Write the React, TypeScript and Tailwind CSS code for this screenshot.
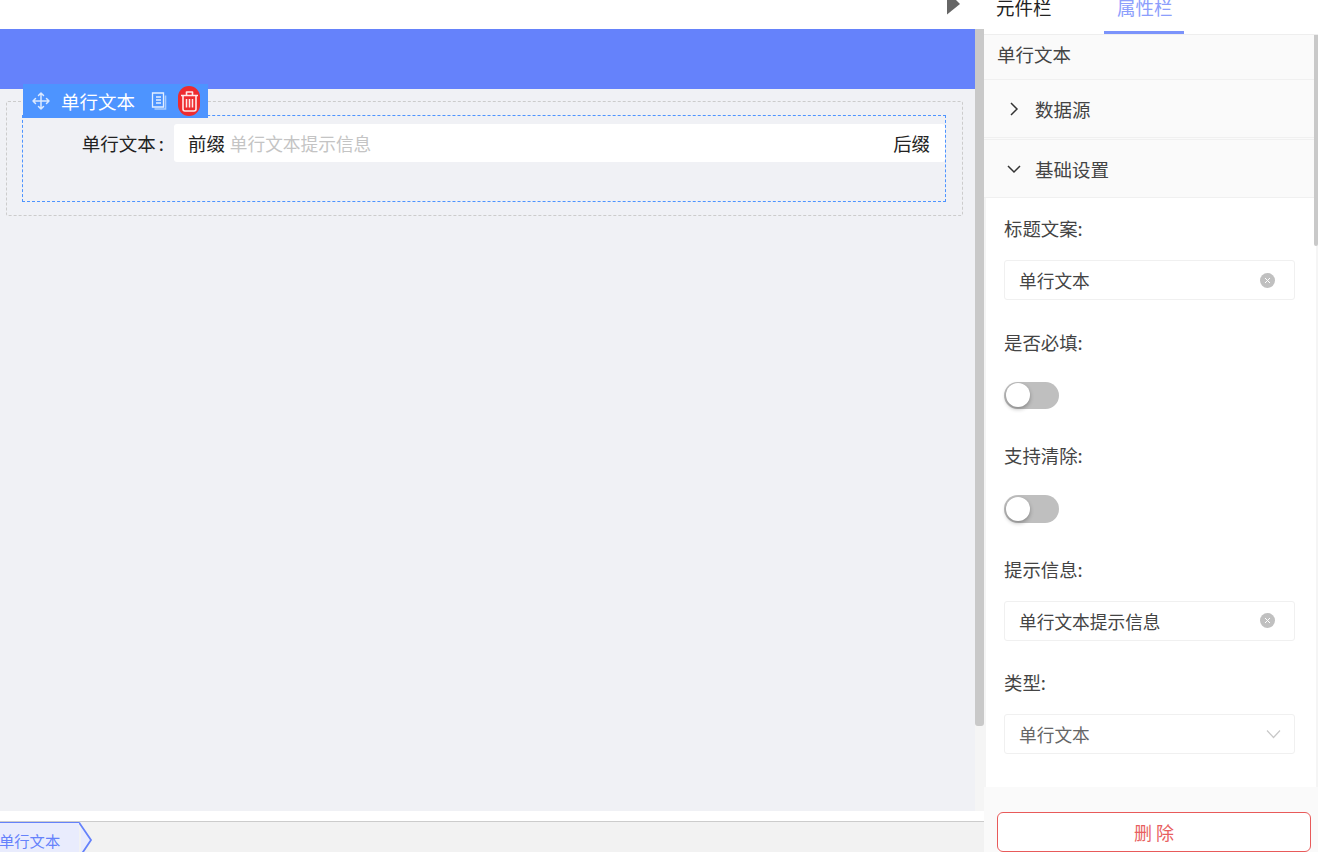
import React from "react";

const font = { fontFamily: '"Noto Sans CJK SC", "Liberation Sans", sans-serif' };

function MoveIcon() {
  return (
    <svg width="20" height="20" viewBox="0 0 20 20" fill="none" stroke="#dbe9ff" strokeWidth="1.5" strokeLinecap="round" strokeLinejoin="round">
      <path d="M10 2v16M2 10h16M7.500 4.500 10 2l2.500 2.500M7.500 15.500 10 18l2.500-2.500M4.500 7.500 2 10l2.500 2.500M15.500 7.500 18 10l-2.500 2.500" />
    </svg>
  );
}

function CopyIcon() {
  return (
    <svg width="18" height="18" viewBox="0 0 18 18" fill="none" stroke="#e3eeff" strokeWidth="1.300">
      <path d="M1.500 1h11v14h-11z" />
      <path d="M5 5h5M5 8h5M5 11h5" />
      <path d="M14.500 3.500V17H3.500" stroke="#a9cbff" strokeWidth="1.600" />
    </svg>
  );
}

function TrashIcon() {
  return (
    <svg width="19" height="22" viewBox="0 0 19 22" fill="none" stroke="#ffe9e9" strokeWidth="1.600" strokeLinejoin="round">
      <path d="M1 5.500h17M6.500 5V2h6v3" />
      <path d="M3 6v13a2 2 0 0 0 2 2h9a2 2 0 0 0 2-2V6" />
      <path d="M6.500 9v8.500M9.500 9v8.500M12.500 9v8.500" strokeWidth="1.500" />
    </svg>
  );
}

function ClearIcon() {
  return (
    <span className="flex h-[15px] w-[15px] items-center justify-center rounded-full bg-[#c0c0c0]">
      <svg width="7" height="7" viewBox="0 0 7 7" fill="none" stroke="#ffffff" strokeWidth="1">
        <path d="M1 1l5 5M6 1 1 6" />
      </svg>
    </span>
  );
}

function Chevron({ open }: { open: boolean }) {
  return (
    <svg width="14" height="14" viewBox="0 0 14 14" fill="none" stroke="#333333" strokeWidth="1.500">
      {open ? <path d="M1 4 7 10 13 4" /> : <path d="M4 1 10 7 4 13" />}
    </svg>
  );
}

function TextField({ value }: { value: string }) {
  return (
    <div className="mt-[19px] flex h-[40px] w-[291px] items-center justify-between rounded-[3px] border border-[#f0f0f0] pl-[14px] pr-[19px] text-[17.700px] text-[#444444]">
      <span className="pt-[1px]">{value}</span>
      <ClearIcon />
    </div>
  );
}

function Toggle() {
  return (
    <div className="mt-[27px] flex h-[27.500px] w-[55px] items-center rounded-full bg-[#bfbfbf] pl-[2px]">
      <span className="h-[24px] w-[24px] rounded-full bg-white shadow-[0_2px_4px_rgba(0,0,0,0.3)]" />
    </div>
  );
}

function Field({ label, children }: { label: string; children: React.ReactNode }) {
  return (
    <div className="h-[113.500px]">
      <div className="h-[26px] text-[18.400px] leading-[27px] text-[#444444]">{label}</div>
      {children}
    </div>
  );
}

function CollapseHeader({ open, title }: { open: boolean; title: string }) {
  return (
    <div className="flex h-[59px] shrink-0 items-center border-y border-[#f0f0f0] bg-[#fafafa] pl-[23px] text-[#444444]">
      <Chevron open={open} />
      <span className="ml-[14px] pt-[2px]">{title}</span>
    </div>
  );
}

export default function App() {
  return (
    <div className="flex h-[852px] w-[1318px] overflow-hidden bg-white text-[18.500px] text-[#222222]" style={font}>
      <div className="flex w-[984px] shrink-0 flex-col">
        <div className="flex h-[29px] items-start justify-end overflow-hidden pr-[24px]">
          <svg width="13" height="15" viewBox="0 0 13 15">
            <path d="M0 0h9L13 4 0 14.500z" fill="#666666" />
          </svg>
        </div>
        <div className="flex h-[782px]">
          <div className="flex w-[975px] flex-col bg-[#f0f1f5]">
            <div className="h-[60px] bg-[#6582fb]" />
            <div className="relative ml-[6px] mt-[12px] h-[115px] w-[957px] rounded-[2px] border border-dashed border-[#cccccc] pl-[15px] pt-[13px]">
              <div className="h-[87px] w-[924px] border border-dashed border-[#4d94ff] pt-[8px]">
                <div className="flex items-center">
                  <label className="w-[151px] pr-[10px] pt-[1px] text-right">
                    单行文本<span className="ml-[3px]">:</span>
                  </label>
                  <div className="flex h-[38px] flex-1 items-center justify-between rounded-[3px] bg-white pl-[14px] pr-[15px] text-[17.700px]">
                    <div className="flex gap-[5px] pt-[1px]">
                      <span className="text-[18.400px]">前缀</span>
                      <span className="text-[#c4c4c4]">单行文本提示信息</span>
                    </div>
                    <span className="pt-[1px] text-[18.400px]">后缀</span>
                  </div>
                </div>
              </div>
              <div className="absolute left-[16px] top-[-18px] flex h-[34px] w-[185px] items-center bg-[#4d94ff] pl-[8px] text-white">
                <MoveIcon />
                <span className="ml-[10px] pt-[1px]">单行文本</span>
                <span className="ml-[16px] flex"><CopyIcon /></span>
                <span className="ml-[9px] flex h-[30px] w-[22px] items-center justify-center rounded-full bg-[#ee2b2f]">
                  <TrashIcon />
                </span>
              </div>
            </div>
          </div>
          <div className="w-[9px] bg-[#f5f5f5]">
            <div className="h-[697px] rounded-b-[3px] bg-[#c9c9c9]" />
          </div>
        </div>
        <div className="h-[10px]" />
        <div className="flex h-[31px] overflow-hidden border-t border-[#cccccc] bg-[#f2f2f2]">
          <div className="h-[30px] w-[79px] shrink-0 bg-[#e9ecfd] text-[15.300px] leading-[34px] text-[#6582fb]" style={{ borderTop: "1px solid #6582fb" }}>
            <span className="-ml-[1px] block">单行文本</span>
          </div>
          <svg width="14" height="30" viewBox="0 0 14 30" className="shrink-0">
            <path d="M0 0.500 12 18 2 33V0z" fill="#e9ecfd" />
            <path d="M0 0.500 12 18 2 33" fill="none" stroke="#6582fb" strokeWidth="1.800" />
          </svg>
        </div>
      </div>

      <div className="flex flex-1 flex-col bg-[#fafafa]">
        <div className="flex h-[35px] shrink-0 border-b border-[#eeeeee] bg-white">
          <div className="ml-[12px] w-[57px] -translate-y-[13px] leading-[40px]">元件栏</div>
          <div className="relative ml-[64px] w-[56px] -translate-y-[13px] leading-[40px] text-[#8c9efc]">
            属性栏
            <span className="absolute left-[-13px] top-[44px] h-[3px] w-[80px] bg-[#7b93fb]" />
          </div>
        </div>
        <div className="flex h-[44px] shrink-0 items-center pb-[4px] pl-[13px] text-[#444444]">单行文本</div>
        <CollapseHeader open={false} title="数据源" />
        <div className="h-px shrink-0" />
        <CollapseHeader open title="基础设置" />
        <div className="relative h-[589px] shrink-0 border-x-2 border-[#f5f5f5] bg-white pl-[18px] pt-[17px]">
          <Field label="标题文案:"><TextField value="单行文本" /></Field>
          <Field label="是否必填:"><Toggle /></Field>
          <Field label="支持清除:"><Toggle /></Field>
          <Field label="提示信息:"><TextField value="单行文本提示信息" /></Field>
          <Field label="类型:">
            <div className="mt-[19px] flex h-[40px] w-[291px] items-center justify-between rounded-[3px] border border-[#f0f0f0] pl-[14px] pr-[13px] text-[17.700px] text-[#666666]">
              <span className="pt-[1px]">单行文本</span>
              <svg width="15" height="10" viewBox="0 0 15 10" fill="none" stroke="#c8c8c8" strokeWidth="1.200">
                <path d="M1 1.500 7.500 8.500 14 1.500" />
              </svg>
            </div>
          </Field>
          <div className="absolute right-[-2px] top-[-163px] h-[211px] w-[4px] rounded-b-[2px] bg-[#c9c9c9]" />
        </div>
        <div className="flex flex-1 justify-start pl-[13px] pt-[25px]">
          <button className="h-[40px] w-[314px] rounded-[6px] border border-[#e85a5a] bg-white text-[18px] text-[#e85f5f]">删 除</button>
        </div>
      </div>
    </div>
  );
}
